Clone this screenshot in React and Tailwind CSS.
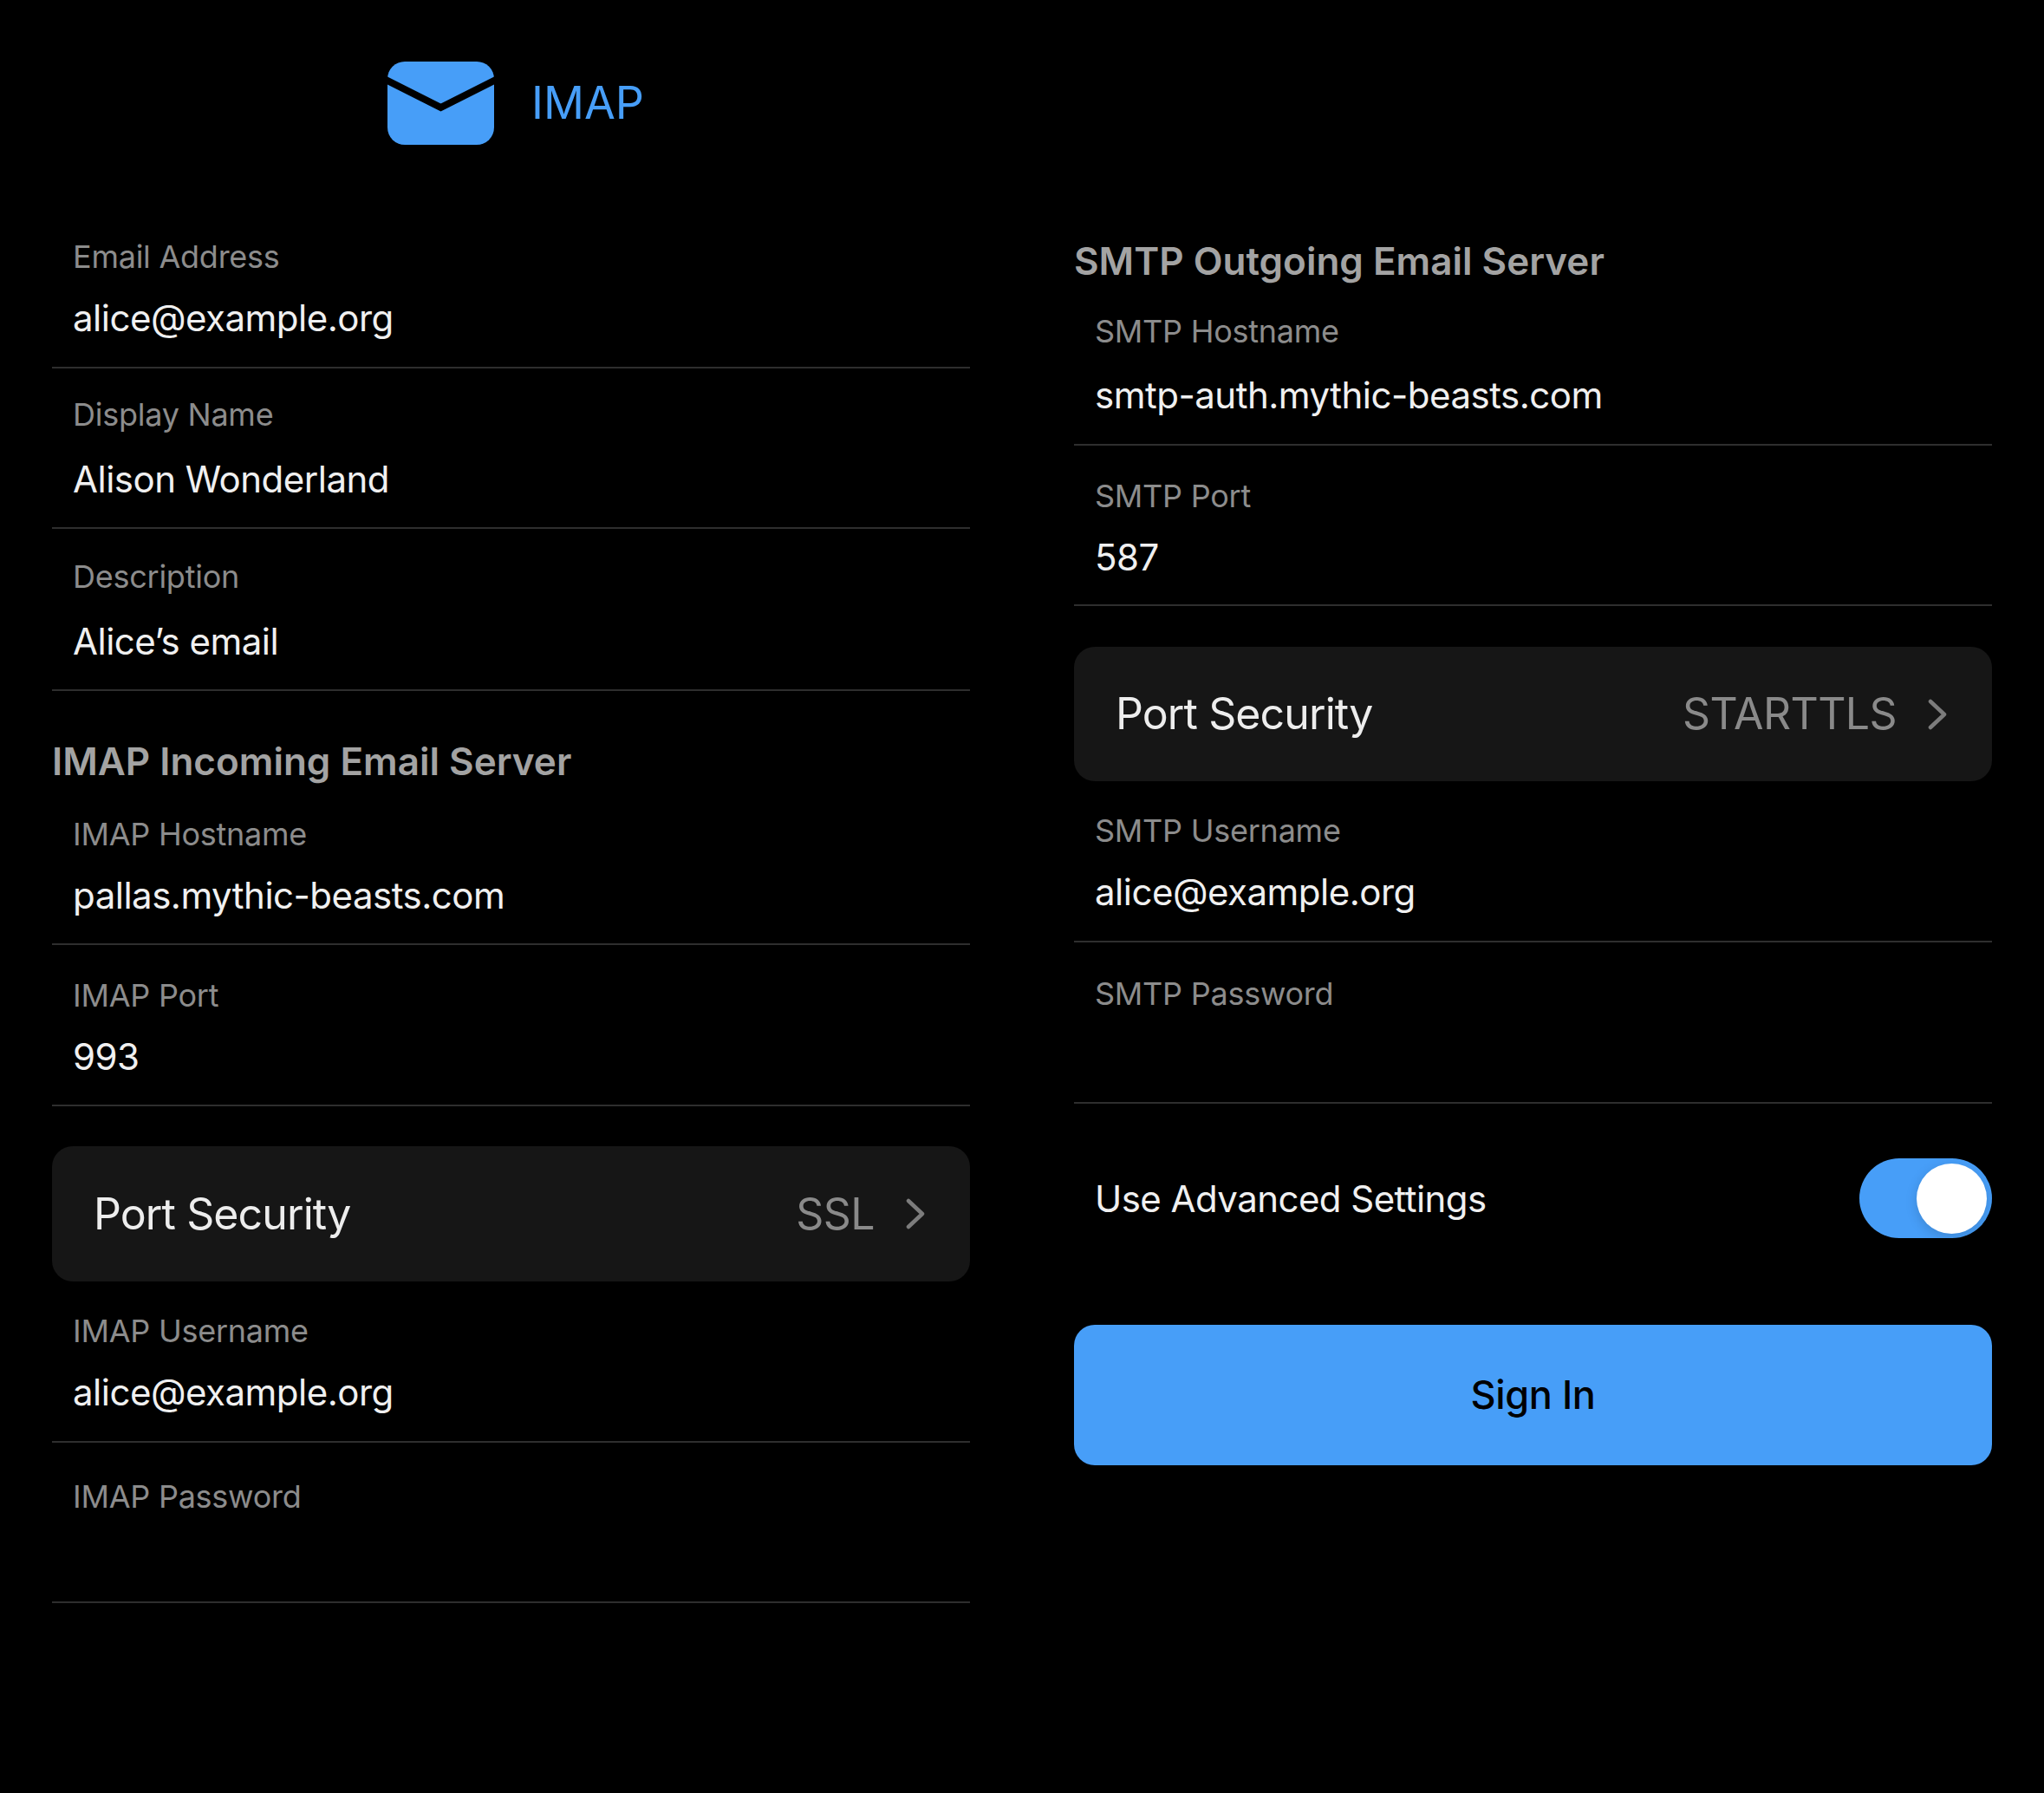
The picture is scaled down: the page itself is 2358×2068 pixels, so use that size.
function Field({ label, value, className, labelClass = "" }) {
  return (
    <div className={`flex flex-col border-b-2 border-[#2e2e2e] px-6 ${className}`}>
      <div className={`text-[36px] leading-[44px] tracking-[-0.25px] text-[#8c8c8c] ${labelClass}`}>{label}</div>
      {value ? <div className="text-[42px] leading-[56px] tracking-[-0.5px] text-[#f0f0f0]">{value}</div> : null}
    </div>
  );
}
function Select({ value, className }) {
  return (
    <div className={`flex items-center rounded-[24px] bg-[#161616] pl-12 pr-[52px] ${className}`}>
      <span className="text-[50px] tracking-[-0.9px] text-[#ededed]">Port Security</span>
      <span className="ml-auto mr-[36px] text-[50px] tracking-[-0.6px] text-[#8a8a8a]">{value}</span>
      <svg width="22" height="36" viewBox="0 0 22 36" fill="none">
        <path d="M3 3 L19 18 L3 33" stroke="#7c7c7c" strokeWidth="4.5" strokeLinecap="round" strokeLinejoin="round" />
      </svg>
    </div>
  );
}
function Heading({ children }) {
  return <div className="text-[44px] leading-[56px] font-semibold text-[#a3a3a3]">{children}</div>;
}
export default function App() {
  return (
    <div className="min-h-[2068px] w-[2358px] bg-black px-[60px] font-['Inter',sans-serif]">
      <div className="flex gap-[120px]">
        <div className="w-[1059px] shrink-0">
          <div className="h-[240px] pl-[387px] pt-[71px]">
            <div className="flex items-center gap-[43px]">
              <svg width="123" height="96" viewBox="0 0 123 96">
                <rect width="123" height="96" rx="20" fill="#479ef8" />
                <path d="M-2 21 L61.5 53 L125 21" fill="none" stroke="#000" strokeWidth="8" />
              </svg>
              <span className="text-[52px] leading-[64px] text-[#479ef8]">IMAP</span>
            </div>
          </div>
          <Field label="Email Address" value="alice@example.org" className="h-[185px] pt-[34px]" labelClass="mb-[21px]" />
          <Field label="Display Name" value="Alison Wonderland" className="h-[185px] pt-[31px]" labelClass="mb-[25px]" />
          <Field label="Description" value="Alice’s email" className="h-[187px] pt-[33px]" labelClass="mb-[25px]" />
          <div className="h-[106px] pt-[53px]"><Heading>IMAP Incoming Email Server</Heading></div>
          <Field label="IMAP Hostname" value="pallas.mythic-beasts.com" className="h-[187px] pt-[37px]" labelClass="mb-[21px]" />
          <Field label="IMAP Port" value="993" className="h-[186px] pt-[36px]" labelClass="mb-[21px]" />
          <Select value="SSL" className="mt-[46px] h-[156px]" />
          <Field label="IMAP Username" value="alice@example.org" className="h-[186px] pt-[35px]" labelClass="mb-[21px]" />
          <Field label="IMAP Password" className="h-[185px] pt-[40px]" />
        </div>
        <div className="w-[1059px] shrink-0">
          <div className="h-[327px] pt-[273px]"><Heading>SMTP Outgoing Email Server</Heading></div>
          <Field label="SMTP Hostname" value="smtp-auth.mythic-beasts.com" className="h-[187px] pt-[33px]" labelClass="mb-[24px]" />
          <Field label="SMTP Port" value="587" className="h-[185px] pt-[36px]" labelClass="mb-[21px]" />
          <Select value="STARTTLS" className="mt-[47px] h-[155px]" />
          <Field label="SMTP Username" value="alice@example.org" className="h-[186px] pt-[35px]" labelClass="mb-[21px]" />
          <Field label="SMTP Password" className="h-[186px] pt-[37px]" />
          <div className="mt-[63px] flex h-[92px] items-center px-6">
            <span className="text-[42px] tracking-[-0.55px] text-[#f0f0f0]">Use Advanced Settings</span>
            <div className="ml-auto -mr-6 flex h-[92px] w-[153px] items-center justify-end rounded-full bg-[#479ef8] pr-[6px]">
              <div className="h-[81px] w-[81px] rounded-full bg-white shadow-[0_4px_14px_rgba(0,0,0,0.15)]" />
            </div>
          </div>
          <button className="mt-[100px] flex h-[162px] w-full items-center justify-center rounded-[24px] bg-[#479ef8] text-[45px] font-medium tracking-[-0.4px] text-black">
            Sign In
          </button>
        </div>
      </div>
    </div>
  );
}
